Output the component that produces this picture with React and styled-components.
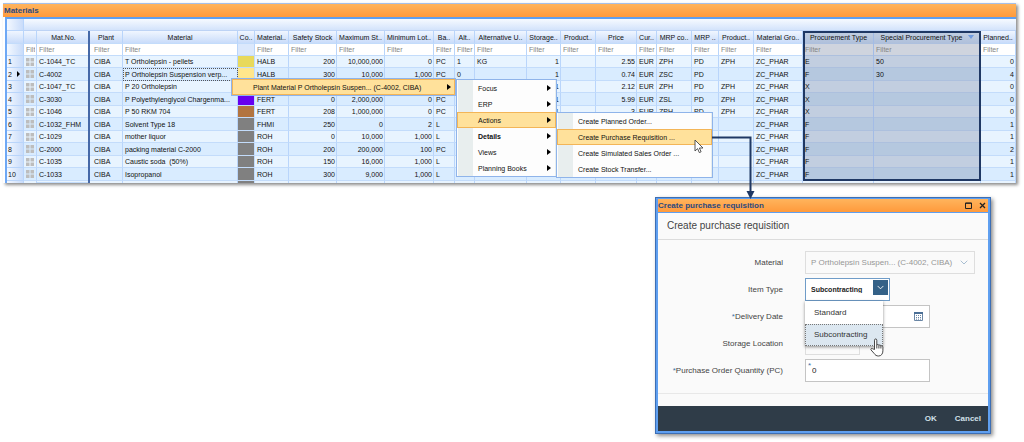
import React, { useState } from 'react'
import styled, { createGlobalStyle, css } from 'styled-components'

const columns = [
  { key: 'icon', label: '', width: 13 },
  { key: 'matNo', label: 'Mat.No.', width: 53, frozen: true },
  { key: 'plant', label: 'Plant', width: 33 },
  { key: 'material', label: 'Material', width: 115 },
  { key: 'color', label: 'Co..', width: 17, noFilter: true },
  { key: 'type', label: 'Material..', width: 34 },
  { key: 'safety', label: 'Safety Stock', width: 48, numeric: true },
  { key: 'max', label: 'Maximum St..', width: 48, numeric: true },
  { key: 'min', label: 'Minimum Lot..', width: 49, numeric: true },
  { key: 'base', label: 'Ba..', width: 21 },
  { key: 'alt', label: 'Alt..', width: 20 },
  { key: 'altUnit', label: 'Alternative U..', width: 52 },
  { key: 'storage', label: 'Storage..', width: 34, numeric: true },
  { key: 'product', label: 'Product..', width: 35 },
  { key: 'price', label: 'Price', width: 41, numeric: true },
  { key: 'currency', label: 'Cur..', width: 20 },
  { key: 'mrpCo', label: 'MRP co..', width: 35 },
  { key: 'mrp', label: 'MRP ..', width: 27 },
  { key: 'product2', label: 'Product..', width: 35 },
  { key: 'group', label: 'Material Gro..', width: 49 },
  { key: 'procurement', label: 'Procurement Type', width: 71, mark: 'left' },
  { key: 'special', label: 'Special Procurement Type', width: 107, mark: 'right', sorted: true },
  { key: 'planned', label: 'Planned..', width: 35, numeric: true },
]

const base = { plant: 'CIBA', storage: '1', group: 'ZC_PHAR' }

const rows = [
  { ...base, matNo: 'C-1044_TC', material: 'T Ortholepsin - pellets', color: '#e8d95c', type: 'HALB', safety: '200', max: '10,000,000', min: '0', base: 'PC', alt: '1', altUnit: 'KG', price: '2.55', currency: 'EUR', mrpCo: 'ZPH', mrp: 'PD', product2: 'ZPH', procurement: 'E', special: '50', planned: '0' },
  { ...base, matNo: 'C-4002', material: 'P Ortholepsin Suspension verp...', color: '#ffe68c', type: 'HALB', safety: '300', max: '10,000', min: '1,000', base: 'PC', alt: '0', price: '0.74', currency: 'EUR', mrpCo: 'ZSC', mrp: 'PD', procurement: 'F', special: '30', planned: '4', current: true },
  { ...base, matNo: 'C-1047_TC', material: 'P 20 Ortholepsin', color: '#ffe68c', price: '2.12', currency: 'EUR', mrpCo: 'ZPH', mrp: 'PD', product2: 'ZPH', procurement: 'X', planned: '0' },
  { ...base, matNo: 'C-3030', material: 'P Polyethylenglycol Chargenma...', color: '#6600f0', type: 'FERT', safety: '0', max: '2,000,000', min: '0', base: 'PC', price: '5.99', currency: 'EUR', mrpCo: 'ZSL', mrp: 'PD', product2: 'ZPH', procurement: 'X', planned: '0' },
  { ...base, matNo: 'C-1046', material: 'P 50 RKM 704', color: '#b27440', type: 'FERT', safety: '208', max: '1,000,000', min: '0', base: 'PC', price: '3', currency: 'EUR', mrpCo: 'ZPH', mrp: 'PD', product2: 'ZPH', procurement: 'X', planned: '0' },
  { ...base, matNo: 'C-1032_FHM', material: 'Solvent Type 18', color: '#808080', type: 'FHMI', safety: '250', max: '0', min: '2', base: 'L', procurement: 'F', planned: '1' },
  { ...base, matNo: 'C-1029', material: 'mother liquor', color: '#808080', type: 'ROH', safety: '0', max: '10,000', min: '1,000', base: 'L', procurement: 'F', planned: '1' },
  { ...base, matNo: 'C-2000', material: 'packing material C-2000', color: '#808080', type: 'ROH', safety: '200', max: '200,000', min: '100', base: 'PC', procurement: 'F', planned: '2' },
  { ...base, matNo: 'C-1035', material: 'Caustic soda  (50%)', color: '#808080', type: 'ROH', safety: '150', max: '16,000', min: '1,000', base: 'L', procurement: 'F', planned: '1' },
  { ...base, matNo: 'C-1033', material: 'Isopropanol', color: '#808080', type: 'ROH', safety: '300', max: '9,000', min: '1,000', base: 'L', procurement: 'F', planned: '1' },
]

const mainMenu = ['Focus', 'ERP', 'Actions', 'Details', 'Views', 'Planning Books']
const actionsMenu = [
  'Create Planned Order...',
  'Create Purchase Requisition ...',
  'Create Simulated Sales Order ...',
  'Create Stock Transfer...',
]

const Tiles = () => (
  <TilesSvg viewBox='0 0 8 8' aria-hidden='true'>
    <path d='M0 0h3.5v3.5H0zM4.5 0H8v3.5H4.5zM0 4.5h3.5V8H0zM4.5 4.5H8V8H4.5z' fill='#bdbdbd' />
  </TilesSvg>
)

const Cell = ({ column, row, last }) => {
  if (column.key === 'color') return <Swatch $color={row.color} />
  return (
    <Td
      $numeric={column.numeric}
      $frozen={column.frozen}
      $mark={column.mark}
      $last={last}
      $indent={column.key === 'plant'}
      $current={row.current && column.key === 'material'}
    >
      {column.key === 'icon' ? <Tiles /> : row[column.key]}
    </Td>
  )
}

const MaterialsGrid = () => (
  <Grid>
    <colgroup>
      <Col $width={17} />
      {columns.map((column) => <Col key={column.key} $width={column.width} />)}
    </colgroup>
    <thead>
      <BandRow>
        <RowNumber as='td' />
        <Band colSpan={columns.length} />
      </BandRow>
      <HeadRow>
        <Th />
        {columns.map((column) => (
          <Th key={column.key} $frozen={column.frozen} $mark={column.mark} $first>
            <ThInner>
              <span>{column.label}</span>
              {column.sorted && <SortMark viewBox='0 0 6 4' aria-hidden='true'><path d='M0 0h6L3 4z' fill='#6f9be0' /></SortMark>}
            </ThInner>
          </Th>
        ))}
      </HeadRow>
      <FilterRow>
        <RowNumber as='td' />
        {columns.map((column) => (
          <FilterCell key={column.key} $frozen={column.frozen} $mark={column.mark} $plain={column.noFilter} $indent={column.key === 'plant'}>
            {!column.noFilter && <FilterInput placeholder='Filter' aria-label={`Filter ${column.label}`} />}
          </FilterCell>
        ))}
      </FilterRow>
    </thead>
    <tbody>
      {rows.map((row, index) => (
        <Row key={row.matNo}>
          <RowNumber scope='row'>
            <NumberInner>
              {index + 1}
              {row.current && <Pointer viewBox='0 0 3 6' aria-hidden='true'><path d='M0 0l3 3-3 3z' /></Pointer>}
            </NumberInner>
          </RowNumber>
          {columns.map((column) => (
            <Cell key={column.key} column={column} row={row} last={index === rows.length - 1} />
          ))}
        </Row>
      ))}
      <CutRow>
        <RowNumber as='td' />
        {columns.map((column) => (
          column.key === 'color'
            ? <Swatch key={column.key} $color='#808080' />
            : <Td key={column.key} $frozen={column.frozen} />
        ))}
      </CutRow>
    </tbody>
  </Grid>
)

const Arrow = () => (
  <ArrowSvg viewBox='0 0 4 6' aria-hidden='true'><path d='M0 0l4 3-4 3z' /></ArrowSvg>
)

const ContextMenu = () => (
  <>
    <RootMenu aria-label='Context menu'>
      <RootItem>
        Plant Material P Ortholepsin Suspen... (C-4002, CIBA)
        <Arrow />
      </RootItem>
    </RootMenu>
    <MainMenu aria-label='Plant material menu'>
      {mainMenu.map((item) => (
        <MenuItem key={item} $active={item === 'Actions'} $bold={item === 'Details'}>
          {item}
          <Arrow />
        </MenuItem>
      ))}
    </MainMenu>
    <ActionsMenu aria-label='Actions'>
      {actionsMenu.map((item) => (
        <MenuItem key={item} $active={item.includes('Purchase')}>{item}</MenuItem>
      ))}
      <MousePointer viewBox='0 0 10 15' aria-hidden='true'>
        <path d='M1 1v11l2.6-2.4 1.7 4 1.8-.8-1.7-3.8H9z' fill='#fff' stroke='#444' strokeWidth='0.9' />
      </MousePointer>
    </ActionsMenu>
  </>
)

const RequisitionDialog = () => {
  const [type, setType] = useState('Subcontracting')
  const [quantity, setQuantity] = useState('0')

  return (
    <Dialog role='dialog' aria-label='Create purchase requisition'>
      <DialogBar>
        <BarTitle>Create purchase requisition</BarTitle>
        <BarButton aria-label='Maximize'>
          <svg width='7' height='7' viewBox='0 0 7 7'><path d='M.5 1h6v5.500h-6zM.5 1.300h6' fill='none' stroke='#222' /></svg>
        </BarButton>
        <BarButton aria-label='Close'>
          <svg width='7' height='7' viewBox='0 0 7 7'><path d='M1 1l5 5M6 1L1 6' fill='none' stroke='#222' strokeWidth='1.300' /></svg>
        </BarButton>
      </DialogBar>
      <DialogBody>
        <DialogTitle>Create purchase requisition</DialogTitle>
        <Form>
          <Label htmlFor='material'>Material</Label>
          <Field $size='full' $disabled>
            <Select id='material' disabled>
              <option>P Ortholepsin Suspen... (C-4002, CIBA)</option>
            </Select>
            <Chevron viewBox='0 0 8 5' $color='#a9bfd2'><path d='M.7.7L4 4 7.300.7' /></Chevron>
          </Field>

          <Label htmlFor='type'>Item Type</Label>
          <Field $size='combo' $focus>
            <Select id='type' value={type} onChange={(e) => setType(e.target.value)} $strong>
              <option>Standard</option>
              <option>Subcontracting</option>
            </Select>
            <ComboButton>
              <Chevron viewBox='0 0 8 5' $color='#fff'><path d='M.7.7L4 4 7.300.7' /></Chevron>
            </ComboButton>
            <Options role='listbox' aria-label='Item Type'>
              {['Standard', 'Subcontracting'].map((name) => (
                <Option key={name} role='option' aria-selected={name === type} $selected={name === type} onClick={() => setType(name)}>
                  {name}
                </Option>
              ))}
              <Hand viewBox='0 0 14 19' aria-hidden='true'>
                <path
                  d='M4.500 11.500V2.200C4.500.5 6.800.5 6.800 2.200V7c.5-.8 2-.6 2.100.4.6-.7 1.900-.4 2 .5.7-.5 2-.1 2 1.200v3.700c0 3-1.700 5.200-4.300 5.200-2.200 0-3.400-.9-4.400-2.500L1 11.900c-.6-1.100.6-2 1.600-1.200zM6.800 7v3.500M8.900 7.500v3M10.900 8v2.500'
                  fill='#fff'
                  stroke='#333'
                  strokeWidth='0.9'
                  strokeLinejoin='round'
                />
              </Hand>
            </Options>
          </Field>

          <Label htmlFor='date'><Star>*</Star>Delivery Date</Label>
          <Field>
            <Input id='date' />
            <Calendar viewBox='0 0 9 9' aria-hidden='true'>
              <path d='M.5.5h8v8h-8z' fill='#fff' stroke='#6a86a5' />
              <path d='M0 1h9' stroke='#4b6f96' strokeWidth='2' />
              <path d='M2 3.500h1M4 3.500h1M6 3.500h1M2 5.500h1M4 5.500h1M6 5.500h1M2 7.200h1M4 7.200h1M6 7.200h1' stroke='#6a86a5' />
            </Calendar>
          </Field>

          <Label htmlFor='location'>Storage Location</Label>
          <Field $size='small' $disabled>
            <Input id='location' disabled />
          </Field>

          <Label htmlFor='quantity'><Star>*</Star>Purchase Order Quantity (PC)</Label>
          <Field>
            <Required>*</Required>
            <Input id='quantity' value={quantity} onChange={(e) => setQuantity(e.target.value)} />
          </Field>
        </Form>
        <DialogFooter>
          <FooterButton>OK</FooterButton>
          <FooterButton>Cancel</FooterButton>
        </DialogFooter>
      </DialogBody>
    </Dialog>
  )
}

const App = () => {
  return (
    <Page>
      <GlobalStyle />
      <GridWindow>
        <WindowTitle>Materials</WindowTitle>
        <GridFrame>
          <MaterialsGrid />
        </GridFrame>
      </GridWindow>
      <ContextMenu />
      <RequisitionDialog />
      <Connector width='46' height='64' viewBox='0 0 46 64' aria-hidden='true'>
        <path d='M0 1.500h38.500V56' fill='none' stroke='#1f3864' strokeWidth='2' />
        <path d='M34.500 55h8l-4 8z' fill='#1f3864' />
      </Connector>
    </Page>
  )
}

export default App

const GlobalStyle = createGlobalStyle`
  * {
    box-sizing:border-box;
  }

  body {
    margin:0;
    background:#fff;
    font-family:"Liberation Sans", Arial, sans-serif;
    font-size:8px;
    color:#111;
  }

  button, input, select {
    font:inherit;
    color:inherit;
  }
`

const Page = styled.main`
  position:relative;
  padding:3px 8px 8px 3px;
`

const GridWindow = styled.section`
  border-top:1px solid #a5c0ea;
  box-shadow:2px 2px 3px rgba(0, 0, 0, 0.45);
`

const barStyle = css`
  background:linear-gradient(#ffb45c, #ff9a3c);
  color:#2b4a80;
  font-weight:700;
  font-size:8px;
  line-height:13px;
`

const WindowTitle = styled.h1`
  ${barStyle}
  margin:0;
  padding:0 1px;
`

const GridFrame = styled.div`
  border-top:2px solid #5f9ff0;
  border-left:2px solid #6ea8f5;
  margin-left:2px;
`

const Grid = styled.table`
  width:100%;
  table-layout:fixed;
  border-collapse:separate;
  border-spacing:0;
  font-size:7px;
`

const Col = styled.col`
  width:${({ $width }) => $width}px;
`

const BandRow = styled.tr`
  height:12px;
`

const Band = styled.td`
  padding:0;
  background:linear-gradient(#f6faff, #d3e3fb);
  border-bottom:1px solid #bdd3f5;
`

const HeadRow = styled.tr`
  height:13px;
`

const FilterRow = styled.tr`
  height:12px;
`

const lineStyle = css`
  padding:0 1px 0 2px;
  overflow:hidden;
  white-space:pre;
  line-height:11px;
  border-right:1px solid #b9d5fb;
  border-bottom:1px solid #c3dcfb;
`

// thick lines are inset shadows, so that they run on unbroken from row to row
const thickLines = ({ $mark, $frozen, $first, $last }) => {
  if (!$mark && !$frozen) return ''
  const lines = []
  if ($mark === 'left') lines.push('inset 2px 0 #1f3864')
  if ($mark === 'right') lines.push('inset -2px 0 #1f3864')
  if ($mark && $first) lines.push('inset 0 2px #1f3864')
  if ($mark && $last) lines.push('inset 0 -2px #1f3864')
  if ($frozen) lines.push('inset -2px 0 #4669a8')
  if ($mark === 'left') lines.push('inset -1px 0 #a3bce6')
  lines.push(`inset 0 -1px ${$mark ? '#adc0de' : '#c3dcfb'}`)
  return `border:none; padding-bottom:1px; box-shadow:${lines.join(', ')};`
}

const Th = styled.th`
  ${lineStyle}
  padding:0 1px;
  background:${({ $mark }) => $mark
    ? 'linear-gradient(#c3d0e2, #aebfdb)'
    : 'linear-gradient(#f0f6ff, #c9dcfa)'};
  font-weight:400;
  ${thickLines}
`

const ThInner = styled.div`
  display:flex;
  align-items:center;
  justify-content:center;
  gap:6px;
`

const SortMark = styled.svg`
  flex:none;
  width:6px;
  height:4px;
`

const FilterCell = styled.td`
  ${lineStyle}
  background:${({ $mark, $plain }) => $mark ? '#cfd4de' : $plain ? '#dbe8fc' : '#fff'};
  ${({ $indent }) => $indent && 'padding-left:4px;'}
  ${thickLines}
`

const FilterInput = styled.input`
  display:block;
  width:100%;
  height:11px;
  padding:0;
  border:none;
  background:none;
  outline:none;

  &::placeholder {
    color:#858585;
    opacity:1;
  }
`

const Td = styled.td`
  ${lineStyle}
  text-align:${({ $numeric }) => $numeric ? 'right' : 'left'};
  ${({ $indent }) => $indent && 'padding-left:4px;'}
  ${({ $current }) => $current && 'outline:1px dotted #555; outline-offset:-1px;'}
  ${thickLines}
`

const Swatch = styled.td`
  padding:0;
  background:${({ $color }) => $color};
  border-right:1px solid #c3dcfb;
  border-bottom:1px solid #c3dcfb;
`

const RowNumber = styled.th`
  padding:0 1px;
  text-align:left;
  font-weight:400;
  line-height:11px;
  background:linear-gradient(90deg, #f3f8ff, #c9dcfa);
  border-right:1px solid #b9d5fb;
  border-bottom:1px solid #b9d5fb;
`

const NumberInner = styled.div`
  display:flex;
  align-items:center;
  justify-content:space-between;
  padding-right:2px;
`

const Row = styled.tr`
  height:12px;
  background:#e8f4ff;

  td:nth-child(22), td:nth-child(23) {
    background:#c2cee0;
  }

  &:nth-child(even) {
    height:13px;
    background:#d9ecff;
  }

  &:nth-child(even) td:nth-child(22), &:nth-child(even) td:nth-child(23) {
    background:#b5c8df;
  }
`

const CutRow = styled.tr`
  height:2px;
  background:#e8f4ff;

  td {
    line-height:0;
    border-bottom:none;
  }
`

const TilesSvg = styled.svg`
  display:block;
  width:8px;
  height:8px;
`

const Pointer = styled.svg`
  width:3px;
  height:6px;
`

const ArrowSvg = styled.svg`
  width:4px;
  height:6px;
`

const menuStyle = css`
  position:absolute;
  border:1px solid #8fb4ea;
  background:#fdfdfd;
  font-size:7px;
`

const RootMenu = styled.nav`
  ${menuStyle}
  top:78px;
  left:231px;
  width:225px;
`

const itemStyle = css`
  display:flex;
  align-items:center;
  justify-content:space-between;
  width:100%;
  height:16px;
  border:1px solid transparent;
  text-align:left;
  white-space:nowrap;
`

const RootItem = styled.button`
  ${itemStyle}
  padding:0 3px 0 20px;
  background:#ffe19b;
  border-color:#f3b557;
`

const MenuItem = styled.button`
  ${itemStyle}
  padding:0 4px 0 20px;
  background:${({ $active }) => $active ? '#ffe19b' : 'linear-gradient(90deg, #e8eeee 15px, #fdfdfd 15px)'};
  ${({ $active }) => $active && 'border-color:#f3b557;'}
  ${({ $bold }) => $bold && 'font-weight:700;'}
`

const MainMenu = styled.nav`
  ${menuStyle}
  top:79px;
  left:456px;
  width:101px;
`

const ActionsMenu = styled.nav`
  ${menuStyle}
  top:112px;
  left:556px;
  width:157px;
`

const MousePointer = styled.svg`
  position:absolute;
  top:26px;
  left:137px;
  width:10px;
  height:15px;
`

const Connector = styled.svg`
  position:absolute;
  top:136px;
  left:712px;
`

const Dialog = styled.section`
  width:336px;
  margin:14px 25px 0 auto;
  border:1px solid #3d6fb4;
  padding:1px 2px 2px;
  background:#5f9ff0;
  box-shadow:2px 2px 4px rgba(0, 0, 0, 0.45);
`

const DialogBar = styled.header`
  ${barStyle}
  display:flex;
  align-items:center;
  gap:7px;
  padding:0 2px 0 0;
  margin-bottom:1px;
`

const BarTitle = styled.span`
  flex:1;
`

const BarButton = styled.button`
  display:flex;
  padding:0;
  border:none;
  background:none;
  cursor:pointer;
`

const DialogBody = styled.div`
  background:#fafafa;
`

const DialogTitle = styled.h2`
  margin:0;
  padding:0 9px;
  font-size:10px;
  font-weight:400;
  line-height:26px;
  color:#444;
  border-bottom:1px solid #dcdcdc;
`

const Form = styled.form`
  display:grid;
  grid-template-columns:125px 1fr;
  column-gap:22px;
  row-gap:4px;
  align-items:center;
  padding:11px 13px 11px 0;
  border-bottom:1px solid #e8e8e8;
`

const Label = styled.label`
  text-align:right;
  color:#444;
`

const Star = styled.span`
  color:#3f74a8;
`

const fieldWidth = { full: '100%', combo: '85px', small: '55px' }

const Field = styled.div`
  position:relative;
  display:flex;
  align-items:center;
  width:${({ $size }) => fieldWidth[$size] || '125px'};
  height:23px;
  padding:0 2px 0 5px;
  background:${({ $disabled }) => $disabled ? '#fafafa' : '#fff'};
  border:1px solid ${({ $disabled, $focus }) => $focus ? '#6f9cc8' : $disabled ? '#dedede' : '#c4c4c4'};
  color:${({ $disabled }) => $disabled ? '#969696' : '#222'};
`

const Select = styled.select`
  flex:1;
  min-width:0;
  height:100%;
  padding:0;
  border:none;
  outline:none;
  background:none;
  appearance:none;
  opacity:1;
  ${({ $strong }) => $strong && 'font-size:7px; font-weight:700;'}
`

const Input = styled.input`
  flex:1;
  min-width:0;
  padding:0 1px;
  border:none;
  outline:none;
  background:none;
`

const Chevron = styled.svg`
  width:8px;
  height:5px;
  margin:0 4px;
  fill:none;
  stroke:${({ $color }) => $color};
`

const ComboButton = styled.span`
  display:flex;
  align-items:center;
  justify-content:center;
  align-self:flex-start;
  width:15px;
  height:15px;
  margin:1px -1px 0 0;
  background:#346187;
  pointer-events:none;
`

const Options = styled.ul`
  position:absolute;
  z-index:1;
  top:22px;
  left:-1px;
  width:78px;
  margin:0;
  padding:1px 0 0;
  list-style:none;
  background:#fff;
  box-shadow:0 1px 3px rgba(0, 0, 0, 0.45);
`

const Option = styled.li`
  padding:0 8px;
  line-height:20px;
  color:#333;
  border:1px ${({ $selected }) => $selected ? 'dotted #777' : 'solid transparent'};
  background:${({ $selected }) => $selected ? '#dce7f0' : 'none'};
`

const Hand = styled.svg`
  position:absolute;
  top:37px;
  left:65px;
  width:14px;
  height:19px;
`

const Calendar = styled.svg`
  width:9px;
  height:9px;
  margin-right:4px;
`

const Required = styled.span`
  position:absolute;
  top:1px;
  left:2px;
  color:#3f74a8;
`

const DialogFooter = styled.footer`
  display:flex;
  align-items:center;
  justify-content:flex-end;
  gap:18px;
  height:25px;
  margin-top:12px;
  padding:0 7px;
  background:#2f3c48;
`

const FooterButton = styled.button`
  padding:0;
  border:none;
  background:none;
  color:#d3e0ea;
  font-weight:700;
  cursor:pointer;
`
